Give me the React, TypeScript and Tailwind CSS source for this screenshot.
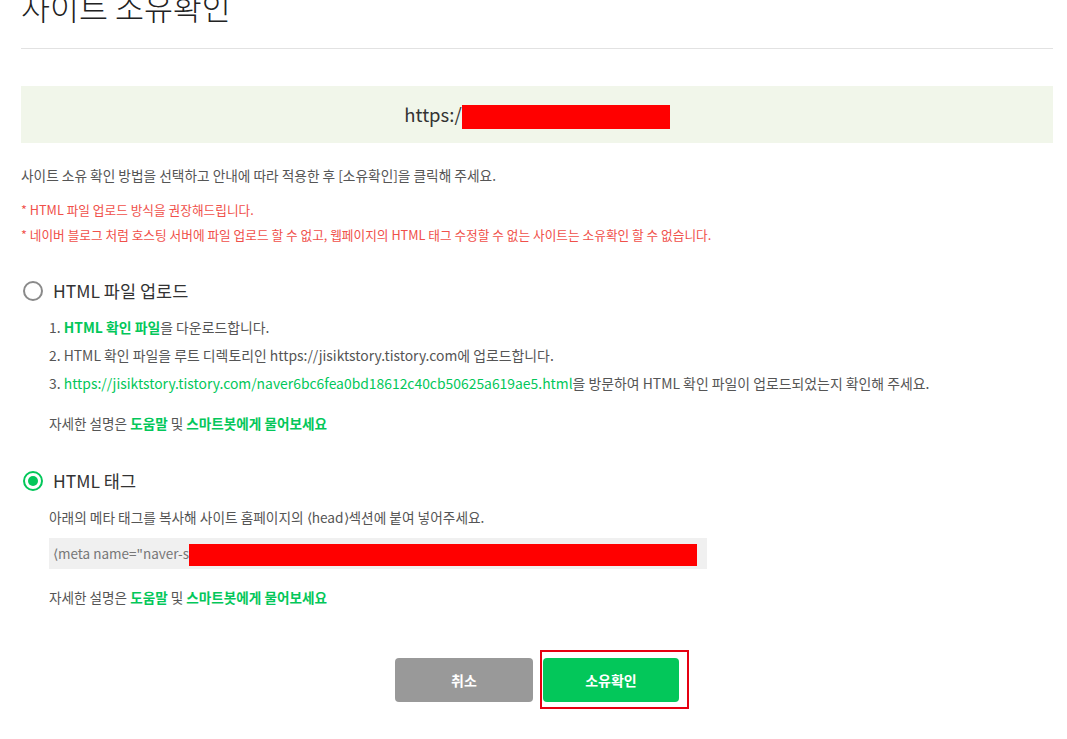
import React, { useState } from 'react';

const FONT = { fontFamily: '"Noto Sans CJK KR", "Noto Sans", sans-serif' };

const Radio: React.FC<{ checked: boolean; label: string; onClick: () => void }> = ({ checked, label, onClick }) => (
  <div className="flex items-center h-[24px] cursor-pointer" onClick={onClick}>
    <span
      className={
        checked
          ? 'w-[20px] h-[20px] rounded-full border-2 border-[#03c75a] flex items-center justify-center ml-[2px]'
          : 'w-[20px] h-[20px] rounded-full border-2 border-[#8a8a8a] ml-[2px]'
      }
    >
      {checked && <span className="w-[10px] h-[10px] rounded-full bg-[#03c75a]" />}
    </span>
    <span className="ml-[10px] text-[17.5px] text-[#333] leading-[24px]">{label}</span>
  </div>
);

const HelpLine: React.FC = () => (
  <p className="text-[13.6px] leading-[20px] text-[#555]">
    자세한 설명은 <a className="text-[#03c75a] font-semibold">도움말</a> 및{' '}
    <a className="text-[#03c75a] font-semibold">스마트봇에게 물어보세요</a>
  </p>
);

const App: React.FC = () => {
  const [method, setMethod] = useState<'file' | 'tag'>('tag');

  return (
    <div className="min-h-screen bg-white" style={FONT}>
      <div className="ml-[21px] w-[1032px]">
        <div className="border-b border-[#e2e2e2] h-[49px] overflow-hidden">
          <h1 className="text-[31.5px] font-light text-[#222] leading-[40px] -mt-[14px]">사이트 소유확인</h1>
        </div>

        <div className="mt-[37px] h-[57px] bg-[#f1f6ea] flex items-center justify-center">
          <span className="text-[18.5px] text-[#333]">https:/</span>
          <span className="inline-block w-[208px] h-[24px] bg-[#ff0000] mt-[4px]" />
        </div>

        <p className="mt-[22px] text-[13.7px] leading-[20px] text-[#555]">
          사이트 소유 확인 방법을 선택하고 안내에 따라 적용한 후 [소유확인]을 클릭해 주세요.
        </p>
        <div className="mt-[16px] text-[12.7px] leading-[18px] text-[#f0504a] flex flex-col gap-[7px]">
          <p>* HTML 파일 업로드 방식을 권장해드립니다.</p>
          <p>* 네이버 블로그 처럼 호스팅 서버에 파일 업로드 할 수 없고, 웹페이지의 HTML 태그 수정할 수 없는 사이트는 소유확인 할 수 없습니다.</p>
        </div>

        <div className="mt-[35px]">
          <Radio checked={method === 'file'} label="HTML 파일 업로드" onClick={() => setMethod('file')} />
        </div>
        <div className="pl-[28px]">
          <ol className="mt-[10px] text-[13.9px] leading-[28px] text-[#555]">
            <li>
              1. <a className="text-[#03c75a] font-semibold">HTML 확인 파일</a>을 다운로드합니다.
            </li>
            <li>2. HTML 확인 파일을 루트 디렉토리인 https://jisiktstory.tistory.com에 업로드합니다.</li>
            <li>
              3.{' '}
              <a className="text-[#03c75a]">https://jisiktstory.tistory.com/naver6bc6fea0bd18612c40cb50625a619ae5.html</a>을
              방문하여 HTML 확인 파일이 업로드되었는지 확인해 주세요.
            </li>
          </ol>
          <div className="mt-[16px]">
            <HelpLine />
          </div>
        </div>

        <div className="mt-[36px]">
          <Radio checked={method === 'tag'} label="HTML 태그" onClick={() => setMethod('tag')} />
        </div>
        <div className="pl-[28px]">
          <p className="mt-[14px] text-[13.7px] leading-[20px] text-[#555]">
            아래의 메타 태그를 복사해 사이트 홈페이지의 ⟨head⟩섹션에 붙여 넣어주세요.
          </p>
          <div className="mt-[11px] w-[658px] h-[31px] bg-[#f0f0f0] flex items-center pl-[4px]">
            <span className="text-[13.5px] text-[#777]">⟨meta name="naver-s</span>
            <span className="inline-block w-[508px] h-[22px] bg-[#ff0000] mt-[3px]" />
          </div>
          <div className="mt-[18px]">
            <HelpLine />
          </div>
        </div>

        <div className="mt-[43px] flex justify-center items-start pl-[10px] gap-[7px]">
          <button className="mt-[8px] w-[138px] h-[44px] rounded-[4px] bg-[#999999] text-white text-[14px] font-bold">
            취소
          </button>
          <div className="border-2 border-[#e60012] pl-[1px] pt-[6px] pr-[8px] pb-[5px]">
            <button className="w-[136px] h-[44px] rounded-[4px] bg-[#03c75a] text-white text-[14px] font-bold">
              소유확인
            </button>
          </div>
        </div>
      </div>
    </div>
  );
};

export default App;
